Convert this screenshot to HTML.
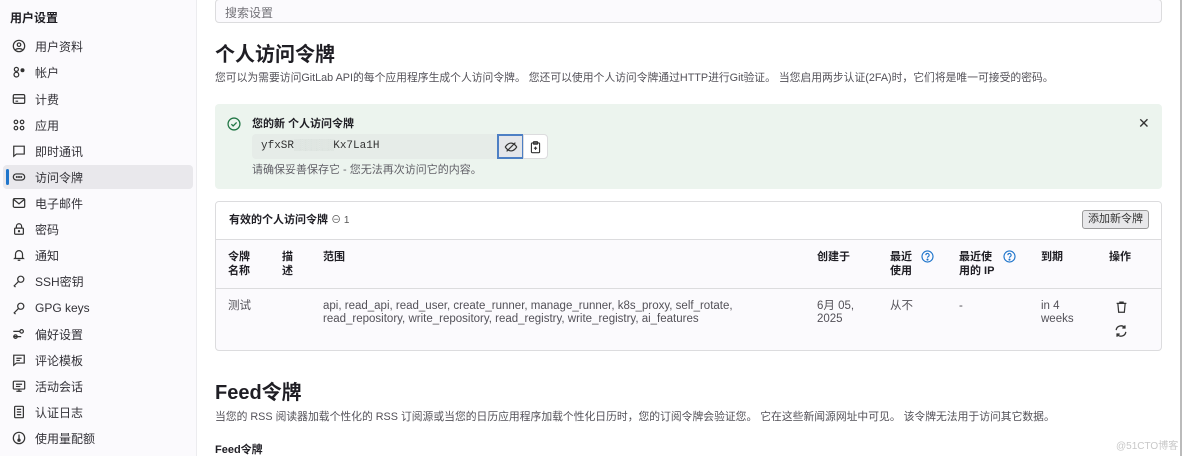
<!DOCTYPE html>
<html><head><meta charset="utf-8"><style>
*{box-sizing:border-box;margin:0;padding:0}
body{width:1184px;height:456px;overflow:hidden;background:#fff;font-family:"Liberation Sans","Noto Sans CJK SC",sans-serif;color:#333238;position:relative;font-size:12px}
.sb{position:absolute;left:0;top:0;width:197px;height:456px;background:#fbfafd;border-right:1px solid #ececef}
.sb h4{position:absolute;left:10px;top:9px;font-size:12px;font-weight:bold;color:#1f1e24}
.it{position:absolute;left:3px;width:190px;height:24px;display:flex;align-items:center;padding-left:9px;font-size:12px;color:#333238;border-radius:4px}
.it svg{width:14px;height:14px;margin-right:9px;flex:none}
.act{background:#e9e8ec}
.act::before{content:"";position:absolute;left:3px;top:4px;width:3px;height:16px;background:#1f75cb;border-radius:2px}
.abs{position:absolute}
.search{left:215px;top:-1px;width:947px;height:24px;border:1px solid #dcdcde;border-radius:4px;background:#fbfafd;padding:4px 9px;color:#737278;font-size:12px}
h1{position:absolute;left:215px;top:38px;font-size:20px;font-weight:bold;color:#1f1e24}
.desc{position:absolute;left:215px;font-size:10.8px;color:#535158}
.alert{left:215px;top:104px;width:947px;height:85px;background:#ecf4ee;border-radius:4px}
.card{left:215px;top:201px;width:947px;height:150px;border:1px solid #dcdcde;border-radius:4px;background:#fbfafd;overflow:hidden}
.th{font-weight:bold;color:#1f1e24;font-size:11px;line-height:14px}
.td{font-size:11.5px;color:#535158;line-height:13px}
</style></head><body>
<div class="sb">
<h4>用户设置</h4>
<div class="it" style="top:34px"><svg viewBox="0 0 16 16" fill="none" stroke="#333" stroke-width="1.4"><circle cx="8" cy="8" r="6.5"/><circle cx="8" cy="6.5" r="2"/><path d="M4 12.5c1-2 7-2 8 0"/></svg>用户资料</div>
<div class="it" style="top:60px"><svg viewBox="0 0 16 16" fill="none" stroke="#333" stroke-width="1.4"><circle cx="5" cy="5" r="2.3"/><circle cx="5" cy="11" r="2.7"/><circle cx="12" cy="6" r="1.6" fill="#333"/></svg>帐户</div>
<div class="it" style="top:87px"><svg viewBox="0 0 16 16" fill="none" stroke="#333" stroke-width="1.4"><rect x="1.5" y="3" width="13" height="10" rx="1.5"/><path d="M1.5 7h13M4 10.5h3"/></svg>计费</div>
<div class="it" style="top:113px"><svg viewBox="0 0 16 16" fill="none" stroke="#333" stroke-width="1.4"><circle cx="4.5" cy="4.5" r="2"/><circle cx="11.5" cy="4.5" r="2"/><circle cx="4.5" cy="11.5" r="2"/><circle cx="11.5" cy="11.5" r="2"/></svg>应用</div>
<div class="it" style="top:139px"><svg viewBox="0 0 16 16" fill="none" stroke="#333" stroke-width="1.4"><path d="M2 2.5h12v9H5l-3 2.5z"/></svg>即时通讯</div>
<div class="it act" style="top:165px"><svg viewBox="0 0 16 16" fill="none" stroke="#333" stroke-width="1.4"><rect x="1.5" y="4.5" width="13" height="7" rx="3.5"/><circle cx="5.5" cy="8" r=".5" fill="#333"/><circle cx="8" cy="8" r=".5" fill="#333"/><circle cx="10.5" cy="8" r=".5" fill="#333"/></svg>访问令牌</div>
<div class="it" style="top:191px"><svg viewBox="0 0 16 16" fill="none" stroke="#333" stroke-width="1.4"><rect x="1.5" y="3" width="13" height="10" rx="1.5"/><path d="M2 4l6 5 6-5"/></svg>电子邮件</div>
<div class="it" style="top:217px"><svg viewBox="0 0 16 16" fill="none" stroke="#333" stroke-width="1.4"><rect x="3" y="7" width="10" height="7" rx="1"/><path d="M5 7V5a3 3 0 016 0v2"/><circle cx="8" cy="10.5" r=".6" fill="#333"/></svg>密码</div>
<div class="it" style="top:243px"><svg viewBox="0 0 16 16" fill="none" stroke="#333" stroke-width="1.4"><path d="M4 11V7a4 4 0 018 0v4l1 1H3zM6.5 14h3"/></svg>通知</div>
<div class="it" style="top:269px"><svg viewBox="0 0 16 16" fill="none" stroke="#333" stroke-width="1.4"><circle cx="10" cy="6" r="3.5"/><path d="M7.5 8.5L2.5 13.5 4 15"/></svg>SSH密钥</div>
<div class="it" style="top:296px"><svg viewBox="0 0 16 16" fill="none" stroke="#333" stroke-width="1.4"><circle cx="10" cy="6" r="3.5"/><path d="M7.5 8.5L2.5 13.5 4 15"/></svg>GPG keys</div>
<div class="it" style="top:322px"><svg viewBox="0 0 16 16" fill="none" stroke="#333" stroke-width="1.4"><circle cx="11" cy="5" r="2"/><path d="M1.5 5H9M1.5 11h9"/><circle cx="4" cy="11" r="2"/></svg>偏好设置</div>
<div class="it" style="top:348px"><svg viewBox="0 0 16 16" fill="none" stroke="#333" stroke-width="1.4"><path d="M2 2.5h12v9H5l-3 2.5z"/><path d="M5 6h6M5 8.5h4"/></svg>评论模板</div>
<div class="it" style="top:374px"><svg viewBox="0 0 16 16" fill="none" stroke="#333" stroke-width="1.4"><rect x="1.5" y="2.5" width="13" height="9" rx="1"/><path d="M8 11.5V14M5 14h6M4.5 6h7M4.5 8.5h5"/></svg>活动会话</div>
<div class="it" style="top:400px"><svg viewBox="0 0 16 16" fill="none" stroke="#333" stroke-width="1.4"><rect x="3" y="1.5" width="10" height="13" rx="1"/><path d="M5.5 5h5M5.5 8h5M5.5 11h5"/></svg>认证日志</div>
<div class="it" style="top:426px"><svg viewBox="0 0 16 16" fill="none" stroke="#333" stroke-width="1.4"><circle cx="8" cy="8" r="6.5"/><path d="M8 4v5"/><circle cx="8" cy="10.5" r="1.2" fill="#333"/></svg>使用量配额</div>
</div>
<div style="position:absolute;left:1180px;top:0;width:2px;height:456px;background:#bbb"></div>
<div class="abs search">搜索设置</div>
<h1>个人访问令牌</h1>
<div class="desc" style="top:69px">您可以为需要访问GitLab API的每个应用程序生成个人访问令牌。 您还可以使用个人访问令牌通过HTTP进行Git验证。 当您启用两步认证(2FA)时，它们将是唯一可接受的密码。</div>
<div class="abs alert">
<svg class="abs" style="left:12px;top:13px" width="14" height="14" viewBox="0 0 16 16" fill="none" stroke="#217645" stroke-width="1.5"><circle cx="8" cy="8" r="6.8"/><path d="M5 8.2l2 2 4-4"/></svg>
<div class="abs" style="left:37px;top:11px;font-weight:bold;font-size:11px;color:#1f1e24">您的新 个人访问令牌</div>
<div class="abs" style="left:37px;top:30px;width:245px;height:25px;background:#e6ece8;border-radius:4px 0 0 4px;font-family:'Liberation Mono',monospace;font-size:11px;padding:6px 9px;color:#333">yfxSR<span style="color:#cfd6d2;letter-spacing:-1px">▒▒▒▒▒▒▒</span>Kx7La1H</div>
<div class="abs" style="left:282px;top:30px;width:27px;height:25px;border:2px solid #4d7fc4;background:#e4e6ea"><svg class="abs" style="left:5px;top:4px" width="14" height="14" viewBox="0 0 16 16" fill="none" stroke="#333" stroke-width="1.4"><path d="M1.5 8s2.5-4.5 6.5-4.5S14.5 8 14.5 8 12 12.5 8 12.5 1.5 8 1.5 8z"/><path d="M3 13L13 3"/></svg></div>
<div class="abs" style="left:308px;top:30px;width:25px;height:25px;border:1px solid #dcdcde;border-radius:0 4px 4px 0;background:#fff"><svg class="abs" style="left:5px;top:5px" width="13" height="14" viewBox="0 0 16 16" fill="none" stroke="#333" stroke-width="1.4"><rect x="3" y="3" width="10" height="12" rx="1"/><rect x="5.5" y="1.5" width="5" height="3" rx=".5"/><path d="M6 9.5h4M8 7.5v4"/></svg></div>
<div class="abs" style="left:37px;top:57px;font-size:11px;color:#626168">请确保妥善保存它 - 您无法再次访问它的内容。</div>
<div class="abs" style="left:923px;top:11px;font-size:14px;color:#333">✕</div>
</div>
<div class="abs card">
<div class="abs" style="left:0;top:0;width:947px;height:38px;background:#fff;border-bottom:1px solid #dcdcde"></div>
<div class="abs th" style="left:13px;top:11px">有效的个人访问令牌 <span style="font-weight:normal;color:#555;font-size:10px">⊖ 1</span></div>
<div class="abs" style="left:866px;top:8px;width:67px;height:19px;border:1px solid #999;border-radius:3px;background:#e8e8ea;font-size:11px;color:#333;text-align:center;line-height:17px">添加新令牌</div>
<div class="abs" style="left:0;top:86px;width:947px;height:1px;background:#dcdcde"></div>
<div class="abs th" style="left:12px;top:48px">令牌<br>名称</div>
<div class="abs th" style="left:66px;top:48px">描<br>述</div>
<div class="abs th" style="left:107px;top:48px">范围</div>
<div class="abs th" style="left:601px;top:48px">创建于</div>
<div class="abs th" style="left:674px;top:48px">最近<br>使用</div>
<svg class="abs" style="left:705px;top:48px" width="13" height="13" viewBox="0 0 16 16" fill="none" stroke="#1f75cb" stroke-width="1.4"><circle cx="8" cy="8" r="6.8"/><path d="M6 6.3a2 2 0 113 1.7c-.8.4-1 .9-1 1.6"/><circle cx="8" cy="11.8" r=".6" fill="#1f75cb"/></svg>
<div class="abs th" style="left:743px;top:48px">最近使<br>用的 IP</div>
<svg class="abs" style="left:787px;top:48px" width="13" height="13" viewBox="0 0 16 16" fill="none" stroke="#1f75cb" stroke-width="1.4"><circle cx="8" cy="8" r="6.8"/><path d="M6 6.3a2 2 0 113 1.7c-.8.4-1 .9-1 1.6"/><circle cx="8" cy="11.8" r=".6" fill="#1f75cb"/></svg>
<div class="abs th" style="left:825px;top:48px">到期</div>
<div class="abs th" style="left:893px;top:48px">操作</div>
<div class="abs td" style="left:12px;top:98px">测试</div>
<div class="abs td" style="left:107px;top:98px">api, read_api, read_user, create_runner, manage_runner, k8s_proxy, self_rotate,<br>read_repository, write_repository, read_registry, write_registry, ai_features</div>
<div class="abs td" style="left:601px;top:98px">6月 05,<br>2025</div>
<div class="abs td" style="left:674px;top:98px">从不</div>
<div class="abs td" style="left:743px;top:98px">-</div>
<div class="abs td" style="left:825px;top:98px">in 4<br>weeks</div>
<svg class="abs" style="left:899px;top:98px" width="13" height="14" viewBox="0 0 16 16" fill="none" stroke="#333" stroke-width="1.5"><path d="M2 3.5h12M6 3.5V2h4v1.5M3.5 3.5l1 11h7l1-11"/></svg>
<svg class="abs" style="left:898px;top:122px" width="14" height="14" viewBox="0 0 16 16" fill="none" stroke="#333" stroke-width="1.5"><path d="M2.5 7a5.5 5.5 0 0110-2.5M13.5 9a5.5 5.5 0 01-10 2.5M12.5 1.5v3h-3M3.5 14.5v-3h3"/></svg>
</div>
<h1 style="top:376px">Feed令牌</h1>
<div class="desc" style="top:408px">当您的 RSS 阅读器加载个性化的 RSS 订阅源或当您的日历应用程序加载个性化日历时，您的订阅令牌会验证您。 它在这些新闻源网址中可见。 该令牌无法用于访问其它数据。</div>
<div class="abs" style="left:215px;top:441px;font-size:11px;font-weight:bold;color:#1f1e24">Feed令牌</div>
<div class="abs" style="left:1116px;top:437px;font-size:10px;color:#c8c8c8">@51CTO博客</div>
</body></html>
